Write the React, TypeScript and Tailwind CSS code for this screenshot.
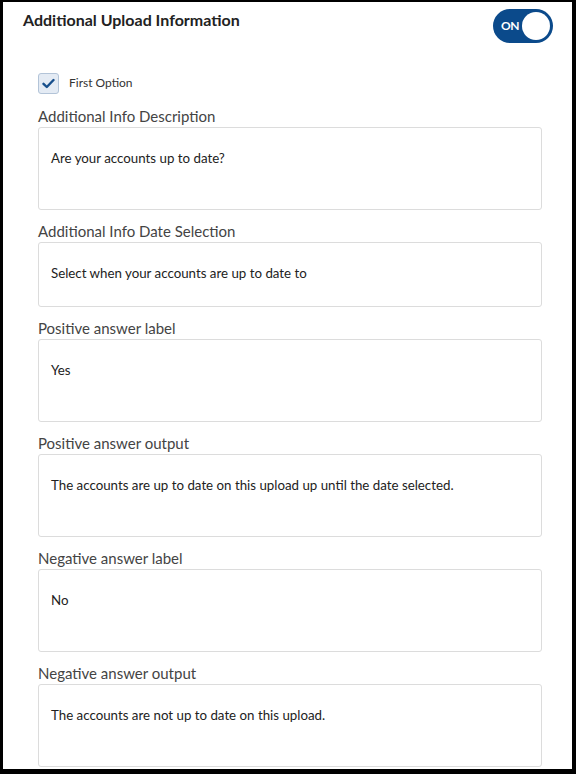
import { useState } from "react";

const fields = [
  { label: "Additional Info Description", value: "Are your accounts up to date?", tall: true },
  { label: "Additional Info Date Selection", value: "Select when your accounts are up to date to", tall: false },
  { label: "Positive answer label", value: "Yes", tall: true },
  { label: "Positive answer output", value: "The accounts are up to date on this upload up until the date selected.", tall: true },
  { label: "Negative answer label", value: "No", tall: true },
  { label: "Negative answer output", value: "The accounts are not up to date on this upload.", tall: true },
];

const App = () => {
  const [on, setOn] = useState(true);
  const [checked, setChecked] = useState(true);

  return (
    <div className="w-[576px] h-[774px] bg-black pt-[2px] pl-[3px] pr-[4px] pb-[5px] font-['Lato',sans-serif]">
      <div className="w-full h-full bg-white overflow-hidden">
        {/* Header */}
        <div className="flex items-start justify-between pt-[7px] pl-[20px] pr-[19px]">
          <h1 className="text-[16px] leading-[22px] font-bold text-[#222]">Additional Upload Information</h1>
          <button
            onClick={() => setOn(!on)}
            className="w-[60px] h-[34px] rounded-full bg-[#0b4a8b] flex items-center pl-[8px] pr-[3px] gap-[3px]"
          >
            <span className="text-white text-[12px] font-bold tracking-[-0.5px]">ON</span>
            <span className="ml-auto w-[28px] h-[28px] rounded-full bg-white" />
          </button>
        </div>

        <div className="ml-[35px] mr-[30px]">
          {/* Checkbox */}
          <label className="flex items-center gap-[10px] mt-[30px] h-[20px] cursor-pointer" onClick={() => setChecked(!checked)}>
            <span className="w-[21px] h-[21px] rounded-[3px] bg-[#e4ebf4] border border-[#b3c4d8] flex items-center justify-center">
              {checked && (
                <svg width="13" height="11" viewBox="0 0 13 11" fill="none">
                  <path d="M1.5 5.8 L4.8 9 L11.5 2" stroke="#174f8c" strokeWidth="2.4" strokeLinecap="round" strokeLinejoin="round" />
                </svg>
              )}
            </span>
            <span className="text-[12px] text-[#333]">First Option</span>
          </label>

          {/* Fields */}
          <div className="mt-[13px] flex flex-col gap-[11px]">
            {fields.map((f) => (
              <div key={f.label}>
                <div className="text-[15px] leading-[20px] text-[#444] mb-[1px]">{f.label}</div>
                <div
                  className={`border border-[#dcdcdc] rounded-[3px] pl-[12px] pt-[21px] text-[13.3px] leading-[18px] text-[#222] ${
                    f.tall ? "h-[83px]" : "h-[65px]"
                  }`}
                >
                  {f.value}
                </div>
              </div>
            ))}
          </div>
        </div>
      </div>
    </div>
  );
};

export default App;
